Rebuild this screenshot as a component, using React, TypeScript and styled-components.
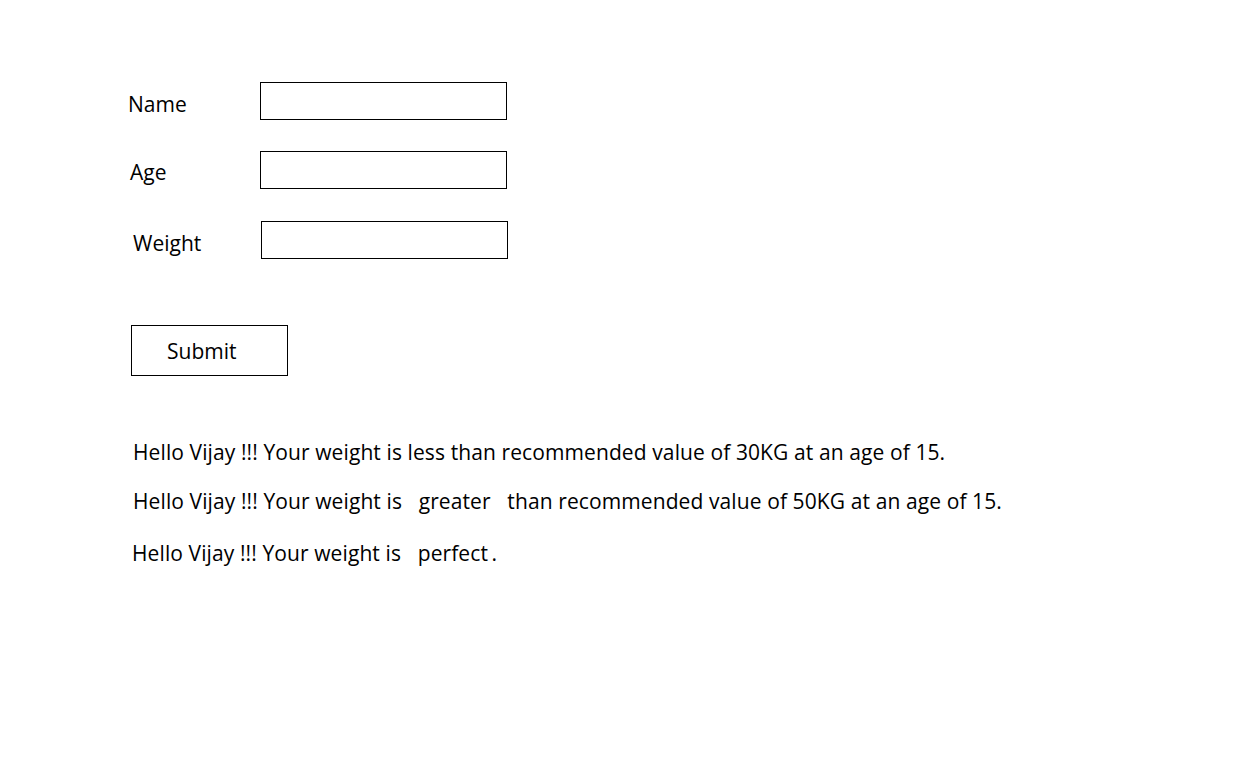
import React from "react";
import styled, { createGlobalStyle } from "styled-components";

const GlobalStyle = createGlobalStyle`
  html, body {
    margin: 0;
    padding: 0;
    background: #ffffff;
  }
  body {
    font-family: "Open Sans", "Noto Sans", Arial, sans-serif;
    color: #000000;
  }
`;

const Page = styled.div`
  width: 1249px;
  height: 777px;
  box-sizing: border-box;
  padding: 82px 0 0 128px;
  display: flex;
  flex-direction: column;
`;

const Form = styled.form`
  display: flex;
  flex-direction: column;
  margin: 0;
`;

const Row = styled.div<{ $indent: number; $top: number; $inputShift: number }>`
  display: grid;
  grid-template-columns: ${(p) => 132 - p.$indent + p.$inputShift}px 247px;
  align-items: center;
  margin-top: ${(p) => p.$top}px;
  padding-left: ${(p) => p.$indent}px;
`;

const Label = styled.label<{ $dy: number }>`
  font-size: 21px;
  line-height: 26px;
  position: relative;
  top: ${(p) => p.$dy}px;
`;

const Field = styled.input`
  box-sizing: border-box;
  width: 247px;
  height: 38px;
  border: 1px solid #000000;
  border-radius: 0;
  margin: 0;
  padding: 0 6px;
  background: #ffffff;
  outline: none;
`;

const SubmitButton = styled.button`
  box-sizing: border-box;
  width: 157px;
  height: 51px;
  margin: 66px 0 0 3px;
  padding: 0 0 0 35px;
  border: 1px solid #000000;
  border-radius: 0;
  background: #ffffff;
  text-align: left;
  font-family: "Open Sans", "Noto Sans", Arial, sans-serif;
  font-size: 21px;
  color: #000000;
  cursor: pointer;
`;

const Messages = styled.div`
  display: flex;
  flex-direction: column;
  margin-top: 63px;
`;

const Message = styled.p<{ $indent: number; $top: number }>`
  margin: ${(p) => p.$top}px 0 0 ${(p) => p.$indent}px;
  font-size: 21px;
  letter-spacing: 0.1px;
  line-height: 26px;
  white-space: pre;
`;

const fields = [
  { label: "Name", indent: 0, top: 0, shift: 0, dy: 3 },
  { label: "Age", indent: 2, top: 31, shift: 0, dy: 2 },
  { label: "Weight", indent: 5, top: 32, shift: 1, dy: 3 },
];

const messages = [
  { text: "Hello Vijay !!! Your weight is less than recommended value of 30KG at an age of 15.", indent: 5, top: 0 },
  { text: "Hello Vijay !!! Your weight is   greater   than recommended value of 50KG at an age of 15.", indent: 5, top: 23 },
  { text: "Hello Vijay !!! Your weight is   perfect\u2009.", indent: 4, top: 26 },
];

const App = () => {
  return (
    <Page>
      <GlobalStyle />
      <Form onSubmit={(e) => e.preventDefault()}>
        {fields.map((f) => (
          <Row key={f.label} $indent={f.indent} $top={f.top} $inputShift={f.shift}>
            <Label $dy={f.dy}>{f.label}</Label>
            <Field type="text" />
          </Row>
        ))}
        <SubmitButton type="submit">Submit</SubmitButton>
      </Form>
      <Messages>
        {messages.map((m, i) => (
          <Message key={i} $indent={m.indent} $top={m.top}>
            {m.text}
          </Message>
        ))}
      </Messages>
    </Page>
  );
};

export default App;
